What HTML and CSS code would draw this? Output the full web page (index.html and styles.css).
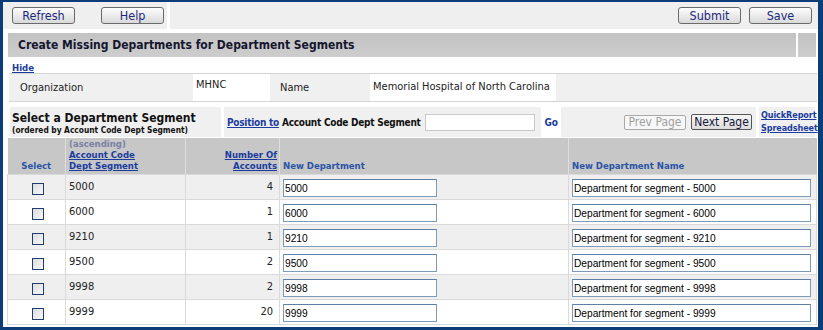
FILE: index.html
```html
<!DOCTYPE html>
<html lang="en">
<head>
    <meta charset="UTF-8">
    <title>Create Missing Departments</title>
    <link rel="stylesheet" href="styles.css">
</head>
<body>
<div class="frame">
    <div class="toolbar">
        <div class="tb-left">
            <button class="btn">Refresh</button>
            <button class="btn btn-help">Help</button>
        </div>
        <div class="tb-right">
            <button class="btn">Submit</button>
            <button class="btn">Save</button>
        </div>
    </div>

    <div class="titlebar">
        <h1 class="title">Create Missing Departments for Department Segments</h1>
        <div class="title-end"></div>
    </div>

    <a class="hide" href="#">Hide</a>

    <div class="org">
        <div class="org-label">Organization</div>
        <div class="org-value org-code">MHNC</div>
        <div class="org-label org-name">Name</div>
        <div class="org-value">Memorial Hospital of North Carolina</div>
        <div class="org-rest"></div>
    </div>

    <div class="selectbar">
        <div class="sel-title">
            <div class="sel-head">Select a Department Segment</div>
            <div class="sel-sub">(ordered by Account Code Dept Segment)</div>
        </div>
        <div class="sel-pos">
            <a class="link" href="#">Position to</a>
            <span class="pos-label">Account Code Dept Segment</span>
            <input class="pos-input" type="text">
            <a class="go" href="#">Go</a>
            <span class="pager">
                <button class="pgbtn pgbtn-prev" disabled>Prev Page</button>
                <button class="pgbtn pgbtn-next">Next Page</button>
            </span>
        </div>
        <div class="sel-links">
            <a class="link" href="#">QuickReport</a>
            <a class="link" href="#">Spreadsheet</a>
        </div>
    </div>

    <table class="grid">
        <colgroup>
            <col class="c-sel"><col class="c-acct"><col class="c-num"><col class="c-dept"><col>
        </colgroup>
        <thead>
            <tr>
                <th class="th-center">Select</th>
                <th><span class="asc">(ascending)</span><br><a class="link" href="#">Account Code<br>Dept Segment</a></th>
                <th class="th-right"><a class="link" href="#">Number Of<br>Accounts</a></th>
                <th>New Department</th>
                <th>New Department Name</th>
            </tr>
        </thead>
        <tbody>
            <tr>
                <td class="td-center"><input class="chk" type="checkbox"></td>
                <td>5000</td>
                <td class="td-right">4</td>
                <td><input class="txt txt-dept" type="text" value="5000"></td>
                <td><input class="txt txt-name" type="text" value="Department for segment - 5000"></td>
            </tr>
            <tr>
                <td class="td-center"><input class="chk" type="checkbox"></td>
                <td>6000</td>
                <td class="td-right">1</td>
                <td><input class="txt txt-dept" type="text" value="6000"></td>
                <td><input class="txt txt-name" type="text" value="Department for segment - 6000"></td>
            </tr>
            <tr>
                <td class="td-center"><input class="chk" type="checkbox"></td>
                <td>9210</td>
                <td class="td-right">1</td>
                <td><input class="txt txt-dept" type="text" value="9210"></td>
                <td><input class="txt txt-name" type="text" value="Department for segment - 9210"></td>
            </tr>
            <tr>
                <td class="td-center"><input class="chk" type="checkbox"></td>
                <td>9500</td>
                <td class="td-right">2</td>
                <td><input class="txt txt-dept" type="text" value="9500"></td>
                <td><input class="txt txt-name" type="text" value="Department for segment - 9500"></td>
            </tr>
            <tr>
                <td class="td-center"><input class="chk" type="checkbox"></td>
                <td>9998</td>
                <td class="td-right">2</td>
                <td><input class="txt txt-dept" type="text" value="9998"></td>
                <td><input class="txt txt-name" type="text" value="Department for segment - 9998"></td>
            </tr>
            <tr>
                <td class="td-center"><input class="chk" type="checkbox"></td>
                <td>9999</td>
                <td class="td-right">20</td>
                <td><input class="txt txt-dept" type="text" value="9999"></td>
                <td><input class="txt txt-name" type="text" value="Department for segment - 9999"></td>
            </tr>
        </tbody>
    </table>
</div>
</body>
</html>
```

FILE: styles.css
```css
body {
    margin: 0;
    background-color: #0c3d78;
    font-family: "DejaVu Sans Condensed", "DejaVu Sans", sans-serif;
    font-stretch: condensed;
    font-size: 11px;
    color: #1a1a1a;
}

.frame {
    margin: 2px 5px 3px 3px;
    height: 325px;
    background-color: #ffffff;
    overflow: hidden;
}

/* top button bar */
.toolbar {
    display: flex;
    height: 27px;
}
.tb-left {
    width: 164px;
    padding: 5px 0 0 9px;
    box-sizing: border-box;
    background-color: #efefef;
    margin-right: 3px;
}
.tb-right {
    flex: 1;
    display: flex;
    justify-content: flex-end;
    gap: 8px;
    padding: 5px 6px 0 0;
    background-color: #efefef;
}
.btn {
    width: 63px;
    height: 17px;
    padding: 0;
    border: 1px solid #6a6a6a;
    border-radius: 3px;
    background: linear-gradient(#fdfdfd, #d9d9d9);
    color: #1d2a7c;
    font-family: inherit;
    font-stretch: condensed;
    font-size: 12.5px;
    line-height: 15px;
    vertical-align: top;
}
.btn-help {
    margin-left: 23px;
}

/* page title */
.titlebar {
    display: flex;
    gap: 2px;
    margin: 4px 2px 0 5px;
    height: 24px;
}
.title {
    flex: 1;
    margin: 0;
    padding-left: 10px;
    background: linear-gradient(#c3c3c3, #cdcdcd);
    font-size: 12px;
    line-height: 24px;
    font-weight: bold;
    color: #15162e;
}
.title-end {
    width: 18px;
    background: linear-gradient(#c3c3c3, #cdcdcd);
}

.link {
    color: #1b3c9e;
    font-weight: bold;
    font-size: 10px;
}
.hide {
    display: block;
    margin: 6px 0 0 9px;
    width: max-content;
    color: #1b3c9e;
    font-weight: bold;
    font-size: 9.5px;
    line-height: 10px;
}

/* organization row */
.org {
    display: grid;
    grid-template-columns: 184px 77px 100px max-content 1fr;
    height: 27px;
    margin: 0 1px 0 6px;
    border-top: 1px solid #d4d4d4;
    border-bottom: 1px solid #d4d4d4;
    color: #222;
}
.org-label {
    background-color: #f0f0f0;
    padding-left: 11px;
    line-height: 27px;
}
.org-name {
    padding-left: 10px;
}
.org-value {
    background-color: #ffffff;
    padding: 0 6px 0 3px;
    line-height: 25px;
}
.org-code {
    line-height: 22px;
}
.org-rest {
    background-color: #f0f0f0;
}

/* select / position bar */
.selectbar {
    display: flex;
    gap: 3px;
    margin: 5px 3px 0 7px;
    height: 30px;
}
.sel-title {
    width: 211px;
    background-color: #f0f0f0;
    padding: 4px 0 0 2px;
    box-sizing: border-box;
    font-weight: bold;
    color: #111;
}
.sel-head {
    font-size: 12px;
    line-height: 14px;
}
.sel-sub {
    font-size: 8.3px;
    line-height: 11px;
}
.sel-pos {
    flex: 1;
    display: flex;
    align-items: center;
    background-color: #f0f0f0;
    padding-left: 3px;
    letter-spacing: -0.26px;
}
.pos-label {
    margin-left: 3px;
    font-weight: bold;
    font-size: 10px;
    color: #111;
}
.pos-input {
    width: 110px;
    height: 17px;
    box-sizing: border-box;
    margin-left: 4px;
    border: 1px solid #c9c9c9;
    background-color: #fff;
}
.go {
    align-self: stretch;
    display: flex;
    align-items: center;
    margin-left: 6px;
    padding: 0 3px 0 4px;
    background-color: #fff;
    color: #1b3c9e;
    font-weight: bold;
    font-size: 10px;
    text-decoration: none;
}
.pager {
    margin-left: auto;
    display: flex;
    align-items: center;
    gap: 5px;
    padding-right: 4px;
}
.pgbtn {
    height: 16px;
    padding: 0;
    border: 1px solid #555;
    border-radius: 2px;
    background: linear-gradient(#f6f6f6, #dcdcdc);
    font-family: inherit;
    font-stretch: condensed;
    font-size: 12px;
    line-height: 13px;
    letter-spacing: 0;
    white-space: nowrap;
    color: #16183a;
}
.pgbtn-prev {
    width: 62px;
    height: 15px;
}
.pgbtn-next {
    width: 61px;
}
.pgbtn:disabled {
    border-color: #a8a8a8;
    background: #f7f7f7;
    color: #a0a0a0;
}
.sel-links {
    width: 56px;
    display: flex;
    flex-direction: column;
    gap: 2px;
    padding: 3px 0 0 2px;
    box-sizing: border-box;
    background-color: #f0f0f0;
}
.sel-links .link {
    font-size: 9px;
    line-height: 11px;
    letter-spacing: -0.1px;
}

/* data grid */
.grid {
    margin: 1px 1px 0 4px;
    width: 810px;
    border-collapse: collapse;
    table-layout: fixed;
}
.c-sel { width: 58px; }
.c-acct { width: 120px; }
.c-num { width: 94px; }
.c-dept { width: 289px; }

.grid th {
    height: 36px;
    box-sizing: border-box;
    padding: 0 3px 3px 3px;
    background-color: #c7c7c7;
    border-left: 1px solid #dedede;
    vertical-align: bottom;
    text-align: left;
    font-size: 9.5px;
    line-height: 11px;
    color: #2a54a6;
}
.grid th:first-child {
    border-left: none;
}
.grid th .link {
    font-size: 9.5px;
}
.asc {
    color: #7b80a6;
}
.th-center { text-align: center !important; }
.th-right { text-align: right !important; padding-right: 2px !important; }

.grid td {
    height: 25px;
    padding: 5px 3px 0 3px;
    box-sizing: border-box;
    border: 1px solid #dadada;
    vertical-align: top;
    font-size: 11px;
    line-height: 13px;
    color: #222;
}
.grid tbody tr:nth-child(odd) td {
    background-color: #efefef;
}
.grid tbody tr:nth-child(even) td {
    background-color: #ffffff;
}
.td-center { text-align: center; }
.td-right { text-align: right; padding-right: 6px !important; }

.grid td:nth-child(4), .grid td:nth-child(5) {
    padding-top: 4px;
}

.chk {
    appearance: none;
    display: block;
    width: 12px;
    height: 12px;
    margin: 3px 0 0 21px;
    border: 1px solid #1f3d6e;
    border-radius: 0;
    background: linear-gradient(135deg, #dcdcdc, #f8f8f8);
}

.txt {
    display: block;
    height: 18px;
    box-sizing: border-box;
    margin: 0;
    padding: 0 1px;
    border: 1px solid #7c9ab9;
    border-top-color: #5e7ea4;
    background-color: #fff;
    font-family: "Liberation Sans", Arial, sans-serif;
    font-size: 10.2px;
    color: #000;
}
.txt-dept { width: 154px; }
.txt-name { width: 239px; }
```
